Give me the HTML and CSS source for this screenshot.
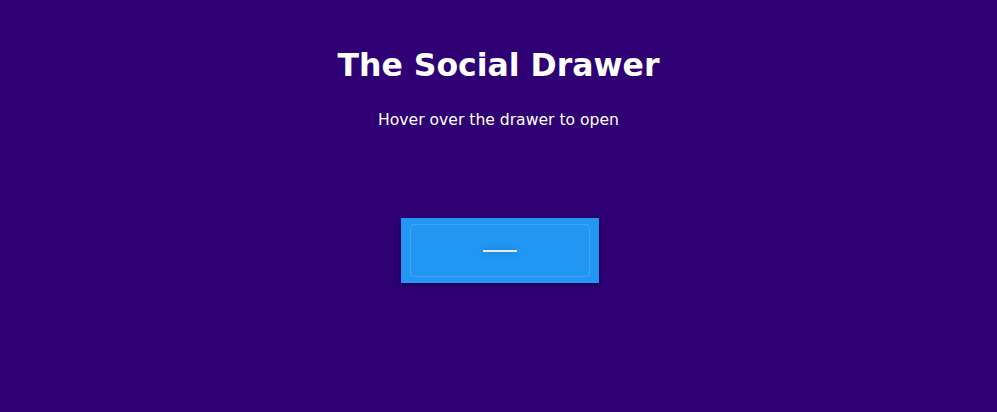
FILE: index.html
```html
<!DOCTYPE html>
<html>
<head>
<meta charset="utf-8">
<link rel="stylesheet" href="styles.css">
</head>
<body>
<div class="page">
  <h1 class="title">The Social Drawer</h1>
  <p class="subtitle">Hover over the drawer to open</p>
  <div class="drawer">
    <div class="drawer-inner">
      <span class="handle"></span>
    </div>
  </div>
</div>
</body>
</html>
```

FILE: styles.css
```css
html, body {
  margin: 0;
  padding: 0;
  background: #2e0073;
  height: 100%;
}
.page {
  display: flex;
  flex-direction: column;
  align-items: center;
  font-family: "DejaVu Sans", sans-serif;
  color: #ffffff;
  padding-top: 45px;
}
.title {
  margin: 0;
  font-size: 31.5px;
  font-weight: bold;
  line-height: 40px;
}
.subtitle {
  margin: 23px 0 0 0;
  font-size: 15.6px;
  line-height: 24px;
}
.drawer {
  margin-top: 86px;
  margin-left: 2px;
  width: 198px;
  height: 65px;
  background: #2196f3;
  box-sizing: border-box;
  padding: 6px 9px;
  box-shadow: 0 2px 5px rgba(0,0,0,0.3);
}
.drawer-inner {
  height: 100%;
  box-sizing: border-box;
  border: 1px solid rgba(255,255,255,0.15);
  border-radius: 4px;
  display: flex;
  align-items: center;
  justify-content: center;
}
.handle {
  display: block;
  width: 34px;
  height: 2px;
  background: #ebe8f5;
  box-shadow: 0 0 6px rgba(0,0,0,0.25);
}
```
